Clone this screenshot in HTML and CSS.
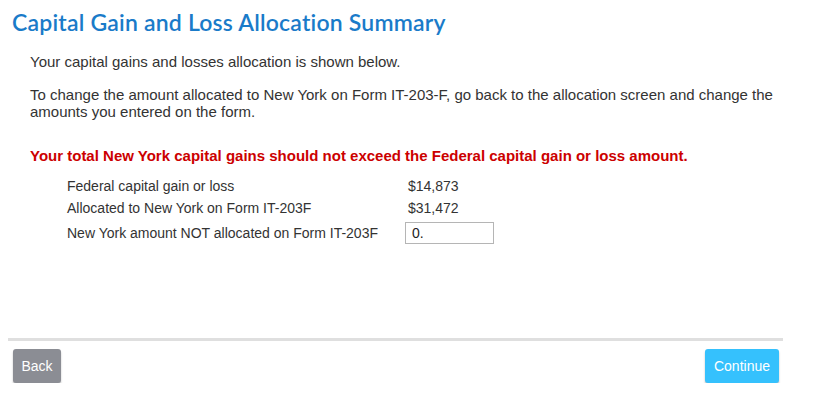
FILE: index.html
```html
<!DOCTYPE html>
<html lang="en">
<head>
  <meta charset="UTF-8">
  <meta name="viewport" content="width=device-width, initial-scale=1.0">
  <title>Capital Gain and Loss Allocation Summary</title>
  <link rel="stylesheet" href="styles.css">
</head>
<body>
  <div class="page">
    <h1 class="title">Capital Gain and Loss Allocation Summary</h1>

    <div class="content">
      <p class="intro">Your capital gains and losses allocation is shown below.</p>
      <p class="intro">To change the amount allocated to New York on Form IT-203-F, go back to the allocation screen and change the amounts you entered on the form.</p>
      <p class="warning">Your total New York capital gains should not exceed the Federal capital gain or loss amount.</p>

      <div class="summary">
        <div class="row">
          <span class="label">Federal capital gain or loss</span>
          <span class="value">$14,873</span>
        </div>
        <div class="row">
          <span class="label">Allocated to New York on Form IT-203F</span>
          <span class="value">$31,472</span>
        </div>
        <div class="row row-input">
          <label class="label" for="notAllocated">New York amount NOT allocated on Form IT-203F</label>
          <input type="text" id="notAllocated" class="amount" value="0.">
        </div>
      </div>
    </div>

    <div class="footer">
      <button type="button" class="btn btn-back">Back</button>
      <button type="button" class="btn btn-continue">Continue</button>
    </div>
  </div>
</body>
</html>
```

FILE: styles.css
```css
body {
  margin: 0;
  padding: 0 8px;
  background: #fff;
  font-family: 'Liberation Sans', Arial, sans-serif;
  color: #333;
}

.page {
  width: 775px;
}

.title {
  margin: 0;
  padding: 8px 0 0 4px;
  box-sizing: border-box;
  height: 40px;
  font-family: 'Lato', sans-serif;
  font-size: 23px;
  line-height: 28px;
  font-weight: 600;
  letter-spacing: 0.2px;
  color: #1a7bc9;
}

.content {
  padding: 13px 0 0 22px;
  height: 298px;
  box-sizing: border-box;
}

.intro {
  margin: 0 0 16px;
  font-size: 15px;
  line-height: 17px;
  color: #333;
}

.warning {
  margin: 27px 0 11px;
  font-size: 15px;
  line-height: 17px;
  font-weight: bold;
  color: #cc0000;
}

.summary {
  padding-left: 37px;
  font-size: 14px;
  color: #333;
}

.row {
  display: flex;
  align-items: center;
  height: 22px;
}

.row-input {
  height: 28px;
}

.label {
  width: 341px;
}

.amount {
  width: 89px;
  height: 22px;
  margin-left: -3px;
  padding: 0 6px;
  box-sizing: border-box;
  border: 1px solid #b5b5b5;
  font-family: 'Liberation Sans', Arial, sans-serif;
  font-size: 14px;
  color: #222;
}

.footer {
  border-top: 3px solid #dfdfdf;
  padding: 8px 4px 0 5px;
  display: flex;
  justify-content: space-between;
}

.btn {
  height: 34px;
  padding: 0;
  border: none;
  border-radius: 3px;
  color: #fff;
  font-family: 'Liberation Sans', Arial, sans-serif;
  font-size: 14px;
  box-shadow: 0 2px 2px rgba(0, 0, 0, 0.25);
  cursor: pointer;
}

.btn-back {
  width: 48px;
  background: #8b8d94;
}

.btn-continue {
  width: 74px;
  background: #35c1fd;
}
```
